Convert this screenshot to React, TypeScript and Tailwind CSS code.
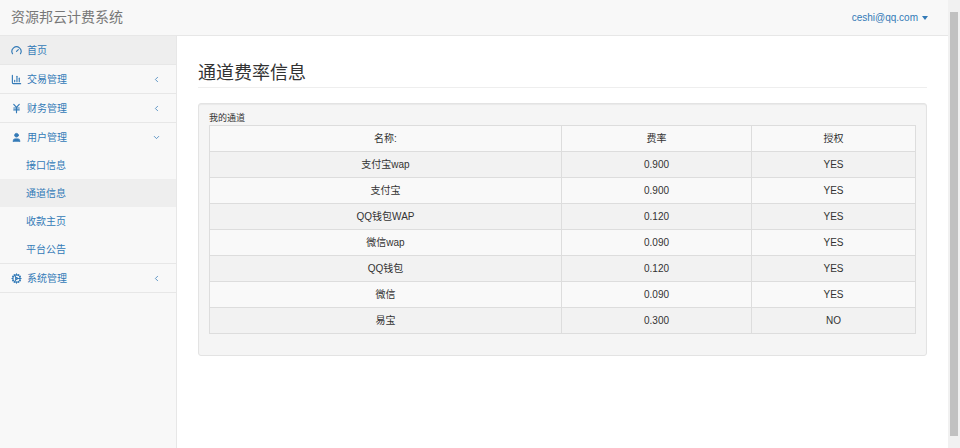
import { ChevronDown, ChevronLeft, Gauge, BarChart3, JapaneseYen, User, Cog } from "lucide-react";

const font = { fontFamily: '"Liberation Sans", "Noto Sans CJK SC", sans-serif' };

const rows = [
  ["支付宝wap", "0.900", "YES"],
  ["支付宝", "0.900", "YES"],
  ["QQ钱包WAP", "0.120", "YES"],
  ["微信wap", "0.090", "YES"],
  ["QQ钱包", "0.120", "YES"],
  ["微信", "0.090", "YES"],
  ["易宝", "0.300", "NO"],
];

function NavItem({ icon: Icon, label, chevron, active }: { icon: any; label: string; chevron?: "left" | "down"; active?: boolean }) {
  return (
    <div className={`flex h-[29px] items-center border-b border-[#e7e7e7] px-[11px] text-[#337ab7] ${active ? "bg-[#eeeeee]" : ""}`}>
      <Icon size={11} className="mr-[5px]" strokeWidth={2.5} />
      <span className="flex-1">{label}</span>
      {chevron === "left" && <ChevronLeft size={9} className="mr-1" />}
      {chevron === "down" && <ChevronDown size={9} className="mr-1" />}
    </div>
  );
}

export default function App() {
  return (
    <div className="flex h-[448px] w-[960px] overflow-hidden bg-white text-[10px] text-[#333]" style={font}>
      <div className="flex w-[948px] flex-col">
        <header className="flex h-[36px] shrink-0 items-center justify-between border-b border-[#e7e7e7] bg-[#f8f8f8] pl-[11px] pr-[20px]">
          <span className="text-[14px] text-[#777]">资源邦云计费系统</span>
          <span className="flex items-center gap-1 text-[10px] text-[#337ab7]">
            ceshi@qq.com
            <span className="inline-block border-x-[3px] border-t-[4px] border-x-transparent border-t-[#337ab7]" />
          </span>
        </header>
        <div className="flex flex-1">
          <aside className="w-[177px] shrink-0 border-r border-[#e7e7e7] bg-[#f8f8f8]">
            <NavItem icon={Gauge} label="首页" active />
            <NavItem icon={BarChart3} label="交易管理" chevron="left" />
            <NavItem icon={JapaneseYen} label="财务管理" chevron="left" />
            <div className="border-b border-[#e7e7e7]">
              <div className="flex h-[28px] items-center px-[11px] text-[#337ab7]">
                <User size={11} className="mr-[5px]" fill="#337ab7" />
                <span className="flex-1">用户管理</span>
                <ChevronDown size={9} className="mr-1" />
              </div>
              {["接口信息", "通道信息", "收款主页", "平台公告"].map((s) => (
                <div key={s} className={`flex h-[28px] items-center pl-[26px] text-[#337ab7] ${s === "通道信息" ? "bg-[#eeeeee]" : ""}`}>
                  {s}
                </div>
              ))}
            </div>
            <NavItem icon={Cog} label="系统管理" chevron="left" />
          </aside>
          <main className="flex-1 pl-[21px] pr-[21px]">
            <h1 className="mt-[27px] border-b border-[#eee] pb-[4px] text-[18px] leading-[20px] text-[#333]">通道费率信息</h1>
            <div className="mt-[15px] rounded-[3px] border border-[#e3e3e3] bg-[#f5f5f5] px-[10px] pb-[21px] pt-[8px] shadow-[inset_0_1px_1px_rgba(0,0,0,0.05)]">
              <div className="text-[9px] leading-[13px]">我的通道</div>
              <table className="w-full border-collapse text-center">
                <tbody>
                  <tr className="h-[26px] bg-[#f9f9f9]">
                    <td className="w-[352px] border border-[#ddd]">名称:</td>
                    <td className="w-[190px] border border-[#ddd]">费率</td>
                    <td className="border border-[#ddd]">授权</td>
                  </tr>
                  {rows.map((r, i) => (
                    <tr key={i} className={`h-[26px] ${i % 2 === 0 ? "bg-[#f2f2f2]" : "bg-[#f9f9f9]"}`}>
                      {r.map((c, j) => (
                        <td key={j} className="border border-[#ddd]">{c}</td>
                      ))}
                    </tr>
                  ))}
                </tbody>
              </table>
            </div>
          </main>
        </div>
      </div>
      <div className="flex w-[12px] flex-col bg-[#f1f1f1]">
        <div className="h-[12px]" />
        <div className="mx-[2px] flex-1 bg-[#c1c1c1]" />
        <div className="h-[12px]" />
      </div>
    </div>
  );
}
